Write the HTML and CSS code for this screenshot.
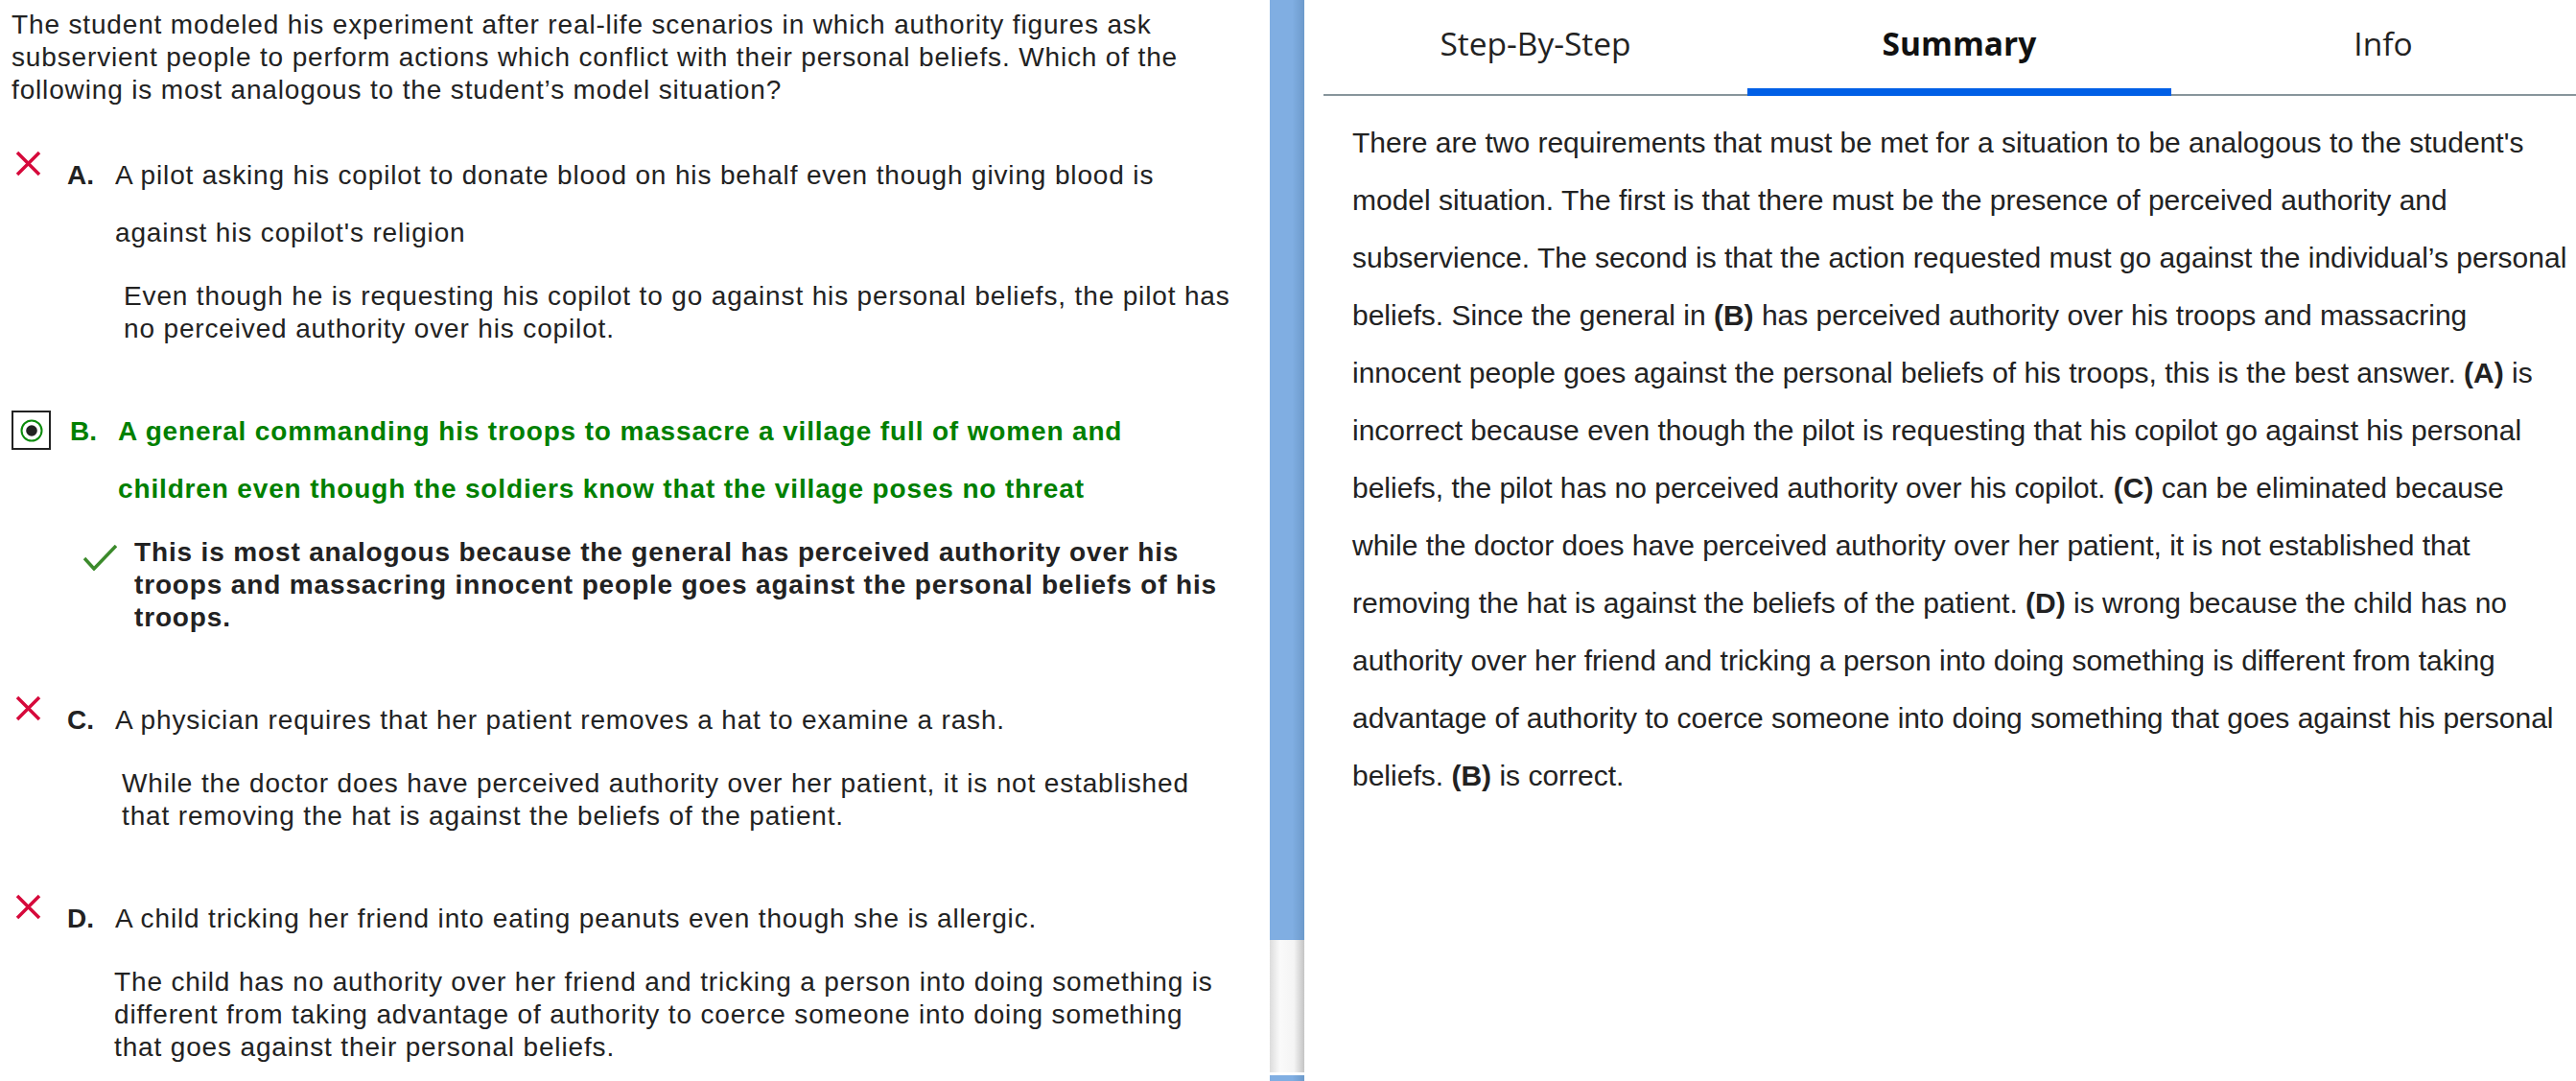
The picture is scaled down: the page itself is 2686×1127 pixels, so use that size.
FILE: index.html
```html
<!DOCTYPE html>
<html lang="en">
<head>
  <meta charset="UTF-8">
  <meta name="viewport" content="width=device-width, initial-scale=1.0">
  <title>Question Review</title>
  <link rel="stylesheet" href="styles.css">
</head>
<body>
  <div class="review">
    <main class="question">
      <p class="question__stem">The student modeled his experiment after real-life scenarios in which authority figures ask subservient people to perform actions which conflict with their personal beliefs. Which of the following is most analogous to the student’s model situation?</p>

      <div class="choice choice--wrong">
        <div class="choice__row">
          <span class="choice__mark">
            <svg width="27" height="27" viewBox="0 0 27 27"><path d="M2 2L25 25M25 2L2 25" stroke="#d6093b" stroke-width="3.5" fill="none"/></svg>
          </span>
          <span class="choice__letter">A.</span>
          <span class="choice__text">A pilot asking his copilot to donate blood on his behalf even though giving blood is against his copilot's religion</span>
        </div>
        <p class="choice__why choice__why--a">Even though he is requesting his copilot to go against his personal beliefs, the pilot has no perceived authority over his copilot.</p>
      </div>

      <div class="choice choice--picked">
        <div class="choice__row">
          <span class="choice__mark">
            <span class="radio">
              <svg width="36" height="36" viewBox="0 0 36 36"><circle cx="18" cy="18" r="10.5" stroke="#0a8a0a" stroke-width="2" fill="none"/><circle cx="18" cy="18" r="5.8" fill="#222"/></svg>
            </span>
          </span>
          <span class="choice__letter">B.</span>
          <span class="choice__text">A general commanding his troops to massacre a village full of women and children even though the soldiers know that the village poses no threat</span>
        </div>
        <div class="choice__verdict">
          <svg width="35" height="27" viewBox="0 0 35 27"><path d="M1 14L11 25L34 1" stroke="#3b8a2b" stroke-width="3.5" fill="none"/></svg>
          <p class="choice__why choice__why--b">This is most analogous because the general has perceived authority over his troops and massacring innocent people goes against the personal beliefs of his troops.</p>
        </div>
      </div>

      <div class="choice choice--wrong">
        <div class="choice__row">
          <span class="choice__mark">
            <svg width="27" height="27" viewBox="0 0 27 27"><path d="M2 2L25 25M25 2L2 25" stroke="#d6093b" stroke-width="3.5" fill="none"/></svg>
          </span>
          <span class="choice__letter">C.</span>
          <span class="choice__text">A physician requires that her patient removes a hat to examine a rash.</span>
        </div>
        <p class="choice__why choice__why--c">While the doctor does have perceived authority over her patient, it is not established that removing the hat is against the beliefs of the patient.</p>
      </div>

      <div class="choice choice--wrong">
        <div class="choice__row">
          <span class="choice__mark">
            <svg width="27" height="27" viewBox="0 0 27 27"><path d="M2 2L25 25M25 2L2 25" stroke="#d6093b" stroke-width="3.5" fill="none"/></svg>
          </span>
          <span class="choice__letter">D.</span>
          <span class="choice__text">A child tricking her friend into eating peanuts even though she is allergic.</span>
        </div>
        <p class="choice__why choice__why--d">The child has no authority over her friend and tricking a person into doing something is different from taking advantage of authority to coerce someone into doing something that goes against their personal beliefs.</p>
      </div>
    </main>

    <div class="splitter">
      <div class="splitter__thumb"></div>
    </div>

    <aside class="explain">
      <nav class="tabs">
        <span class="tabs__item">Step-By-Step</span>
        <span class="tabs__item tabs__item--active">Summary</span>
        <span class="tabs__item">Info</span>
      </nav>
      <p class="explain__text">There are two requirements that must be met for a situation to be analogous to the student's model situation. The first is that there must be the presence of perceived authority and subservience. The second is that the action requested must go against the individual’s personal beliefs. Since the general in <b>(B)</b> has perceived authority over his troops and massacring innocent people goes against the personal beliefs of his troops, this is the best answer. <b>(A)</b> is incorrect because even though the pilot is requesting that his copilot go against his personal beliefs, the pilot has no perceived authority over his copilot. <b>(C)</b> can be eliminated because while the doctor does have perceived authority over her patient, it is not established that removing the hat is against the beliefs of the patient. <b>(D)</b> is wrong because the child has no authority over her friend and tricking a person into doing something is different from taking advantage of authority to coerce someone into doing something that goes against his personal beliefs. <b>(B)</b> is correct.</p>
    </aside>
  </div>
</body>
</html>
```

FILE: styles.css
```css
* {
  box-sizing: border-box;
  margin: 0;
  padding: 0;
}

body {
  font-family: "Liberation Sans", Arial, sans-serif;
  font-size: 28px;
  letter-spacing: 0.85px;
  color: #222;
  background-color: #fff;
}

.review {
  display: flex;
  height: 1127px;
  overflow: hidden;
}

/* left side: question and choices */
.question {
  flex: 0 0 1324px;
  padding: 9px 36px 0 12px;
}

.question__stem {
  line-height: 34px;
  margin-bottom: 42px;
}

.choice {
  margin-bottom: 60px;
}

.choice__row {
  display: flex;
  line-height: 60px;
}

.choice__mark {
  flex: 0 0 58px;
  display: flex;
  align-items: flex-start;
  padding: 4px 0 0 4px;
}

.choice__letter {
  flex: 0 0 50px;
  font-weight: bold;
  letter-spacing: 0;
}

.choice__text {
  flex: 1;
}

.choice--picked .choice__mark {
  flex-basis: 61px;
  padding: 8px 0 0 0;
}

.choice--picked .choice__row {
  color: #008000;
  font-weight: bold;
}

.radio {
  display: flex;
  align-items: center;
  justify-content: center;
  width: 41px;
  height: 41px;
  border: 2.5px solid #222;
}

.choice__why {
  line-height: 34px;
  margin-top: 19px;
}

.choice__why--a { margin-left: 117px; }
.choice__why--c { margin-left: 115px; }
.choice__why--d { margin-left: 107px; }

.choice__verdict {
  display: flex;
  align-items: flex-start;
  gap: 18px;
  margin: 19px 0 0 75px;
}

.choice__verdict svg {
  flex-shrink: 0;
  margin-top: 9px;
}

.choice__why--b {
  margin-top: 0;
  font-weight: bold;
}

/* draggable divider */
.splitter {
  flex: 0 0 36px;
  background: linear-gradient(to right, #80aee2 0%, #80aee2 65%, #6d9acb 100%);
}

.splitter__thumb {
  height: 141px;
  margin-top: 980px;
  background: linear-gradient(to right, #dcdcdc 0%, #fafafa 30%, #f4f4f4 70%, #c4c4c4 100%);
  border-bottom: 3px solid #fff;
}

/* right side: explanation */
.explain {
  flex: 1;
  min-width: 0;
  padding-left: 20px;
  overflow: hidden;
}

.tabs {
  display: flex;
  height: 100px;
  border-bottom: 2px solid #87959b;
}

.tabs__item {
  flex: 0 0 442px;
  height: 100px;
  margin-bottom: -2px;
  padding-top: 25px;
  font-family: "Open Sans", sans-serif;
  font-size: 33.5px;
  letter-spacing: 0;
  line-height: 40px;
  text-align: center;
  color: #222;
}

.tabs__item--active {
  font-weight: bold;
  color: #111;
  border-bottom: 8px solid #005fe6;
}

.explain__text {
  margin: 19px 4px 0 30px;
  font-size: 30px;
  letter-spacing: 0;
  line-height: 60px;
}
```
